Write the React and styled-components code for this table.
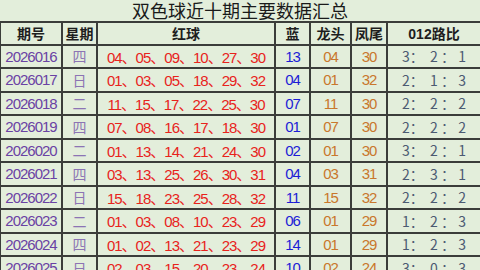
import React from 'react'
import styled, { createGlobalStyle } from 'styled-components'

const GlobalStyle = createGlobalStyle`
  html, body {
    margin: 0;
    padding: 0;
    background: #e3eedb;
  }
`

const rows = [
  ['2026016', '四', '04、05、09、10、27、30', '13', '04', '30', [3, 2, 1]],
  ['2026017', '日', '01、03、05、18、29、32', '04', '01', '32', [2, 1, 3]],
  ['2026018', '二', '11、15、17、22、25、30', '07', '11', '30', [2, 2, 2]],
  ['2026019', '四', '07、08、16、17、18、30', '01', '07', '30', [2, 2, 2]],
  ['2026020', '二', '01、13、14、21、24、30', '02', '01', '30', [3, 2, 1]],
  ['2026021', '四', '03、13、25、26、30、31', '04', '03', '31', [2, 3, 1]],
  ['2026022', '日', '15、18、23、25、28、32', '11', '15', '32', [2, 2, 2]],
  ['2026023', '二', '01、03、08、10、23、29', '06', '01', '29', [1, 2, 3]],
  ['2026024', '四', '01、02、13、21、23、29', '14', '01', '29', [1, 2, 3]],
  ['2026025', '日', '02、03、15、20、23、24', '10', '02', '24', [3, 0, 3]],
]

const Table = styled.div`
  width: 480px;
  height: 270px;
  overflow: hidden;
  box-sizing: border-box;
  padding-left: 1px;
  background: #3b3d3a;
  display: grid;
  grid-template-columns: 60px 33px 176px 33px 39px 34px 92px;
  grid-template-rows: 21px 20.5px;
  grid-auto-rows: 21.5px;
  gap: 2px;
  font-family: "Liberation Sans", "Noto Sans CJK SC", sans-serif;
`

const Title = styled.div`
  grid-column: 1 / -1;
  margin-left: -1px;
  background: #e3eedb;
  display: flex;
  align-items: center;
  justify-content: center;
  font-family: "Noto Sans CJK SC", sans-serif;
  font-size: 18px;
  color: #1a1a1a;
  line-height: 21px;
`

const Head = styled.div`
  background: #e3eedb;
  display: flex;
  align-items: center;
  justify-content: center;
  font-family: "Liberation Sans", "Noto Sans CJK SC", sans-serif;
  font-size: 14px;
  font-weight: bold;
  color: #1e1e1e;
`

const Cell = styled.div`
  background: #e3eedb;
  display: flex;
  align-items: center;
  justify-content: center;
  font-size: 15px;
  letter-spacing: -1px;
  white-space: pre;
  color: ${p => p.$color};
`

const Week = styled(Cell)`
  font-family: "Noto Sans CJK SC", sans-serif;
  font-size: 14px;
  letter-spacing: 0;
`

const Ratio = styled(Cell)`
  font-family: "Noto Sans CJK SC", sans-serif;
  font-size: 14px;
  letter-spacing: 0;
`

const App = () => {
  return (
    <>
      <GlobalStyle />
      <Table>
        <Title>双色球近十期主要数据汇总</Title>
        <Head>期号</Head>
        <Head>星期</Head>
        <Head>红球</Head>
        <Head>蓝</Head>
        <Head>龙头</Head>
        <Head>凤尾</Head>
        <Head>012路比</Head>
        {rows.map(r => (
          <React.Fragment key={r[0]}>
            <Cell $color="#6a42a4">{r[0]}</Cell>
            <Week $color="#8c74b4">{r[1]}</Week>
            <Cell $color="#e8231c">{r[2]}</Cell>
            <Cell $color="#1d1dd6">{r[3]}</Cell>
            <Cell $color="#c9772c">{r[4]}</Cell>
            <Cell $color="#c9772c">{r[5]}</Cell>
            <Ratio $color="#4b5a72">{`${r[6][0]}：  ${r[6][1]} ： ${r[6][2]}`}</Ratio>
          </React.Fragment>
        ))}
      </Table>
    </>
  )
}

export default App
